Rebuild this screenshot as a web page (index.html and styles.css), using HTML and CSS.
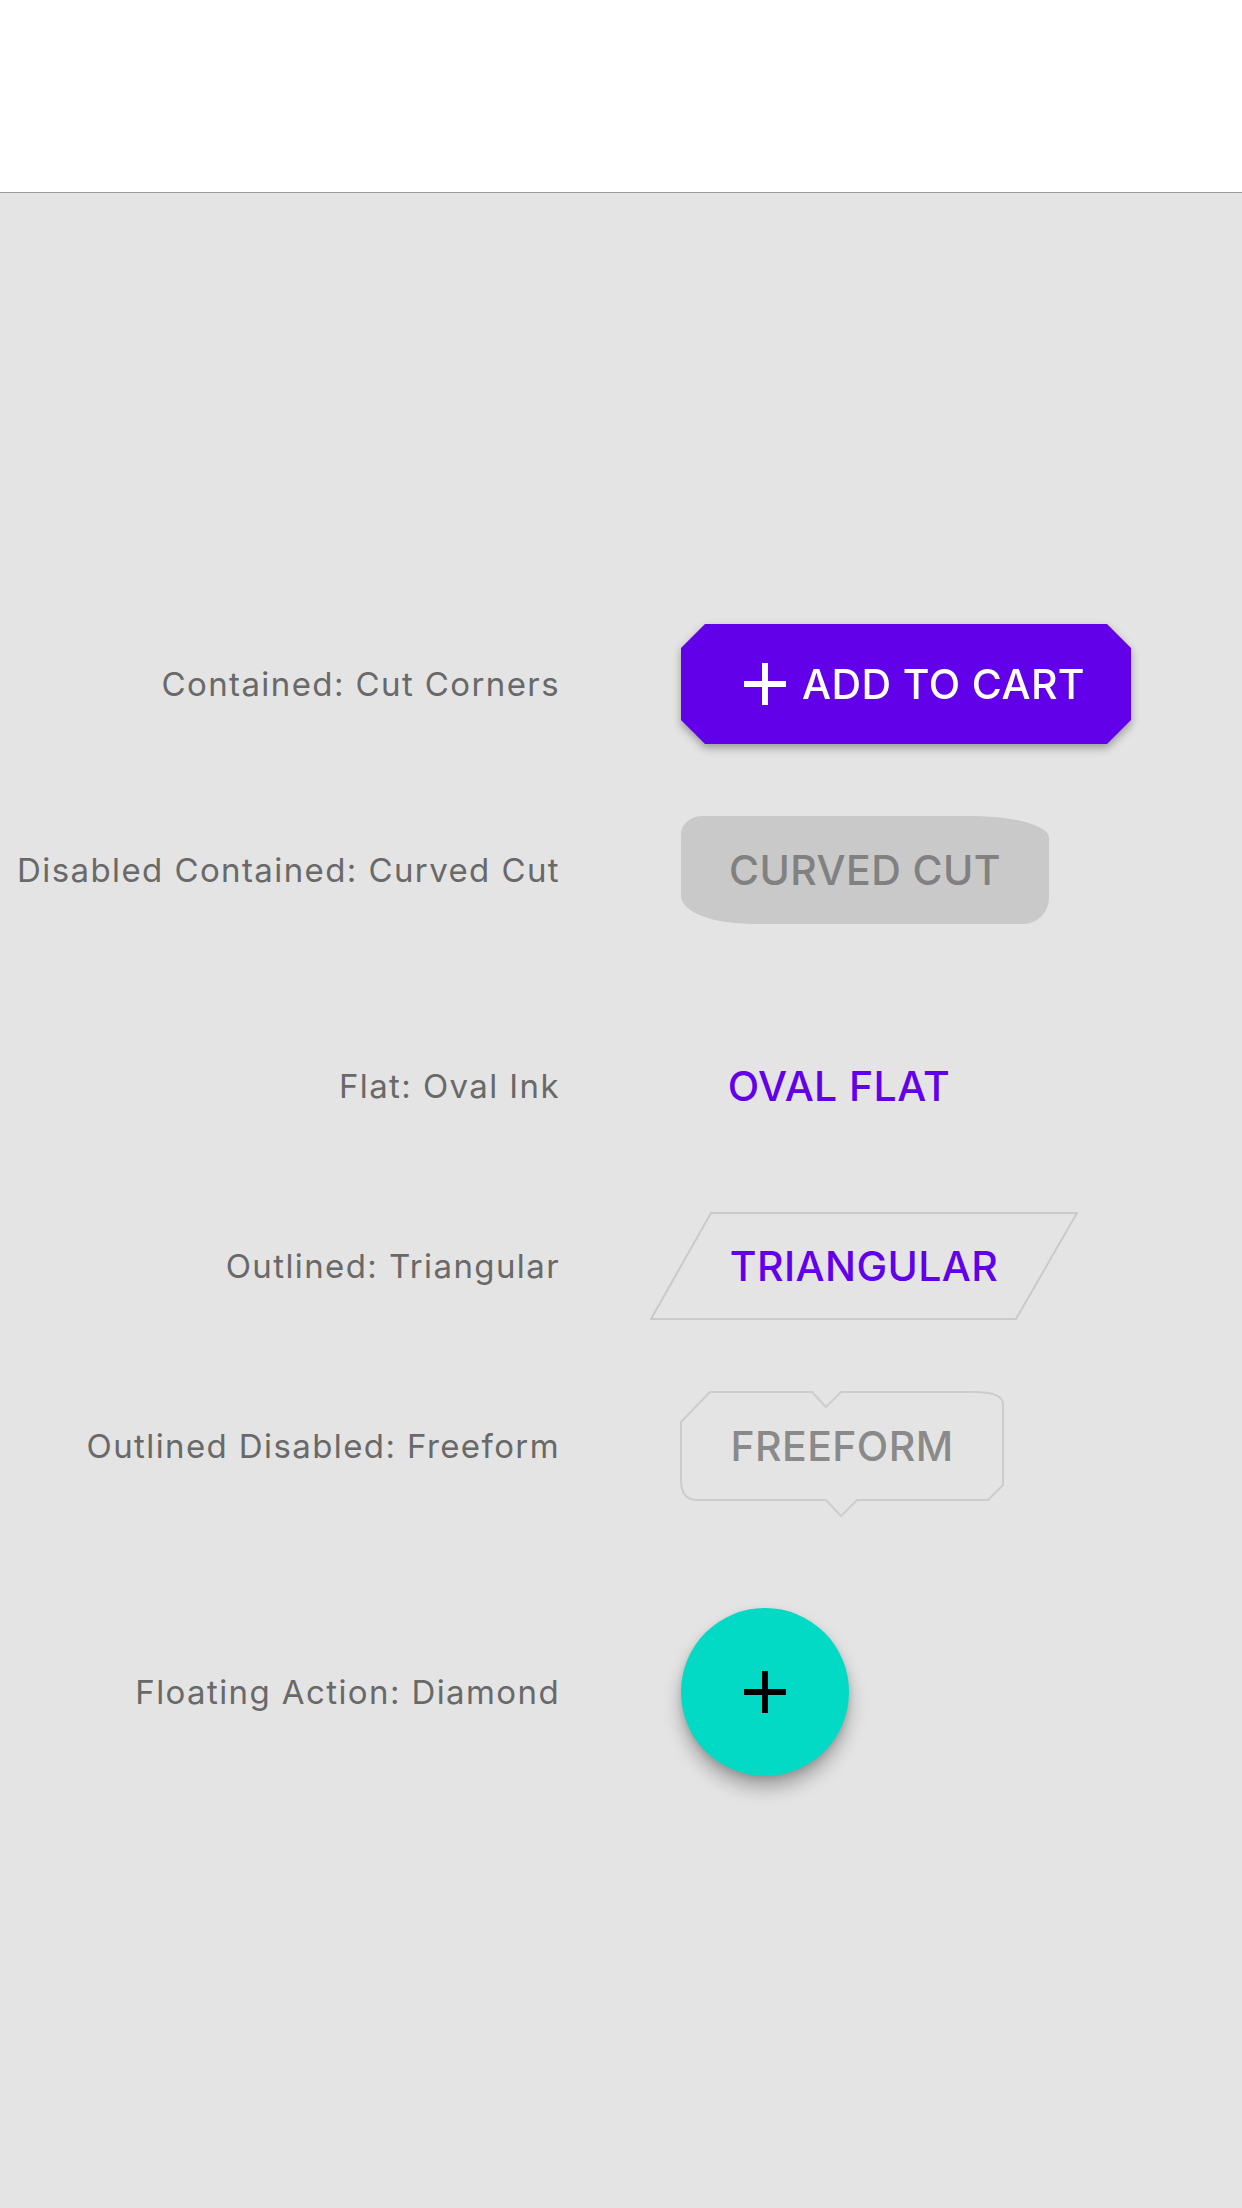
FILE: index.html
```html
<!DOCTYPE html>
<html lang="en">
<head>
<meta charset="utf-8">
<title>Buttons</title>
<link rel="stylesheet" href="styles.css">
</head>
<body>
<header class="topbar"></header>
<main class="list">
  <div class="row">
    <span class="label">Contained: Cut Corners</span>
    <div class="shadow-wrap">
      <button class="btn btn-cut">
        <svg class="plus" viewBox="0 0 42 42" width="42" height="42"><rect x="18" y="0" width="6" height="42"/><rect x="0" y="18" width="42" height="6"/></svg>
        <span>ADD TO CART</span>
      </button>
    </div>
  </div>
  <div class="row">
    <span class="label">Disabled Contained: Curved Cut</span>
    <button class="btn btn-curved" disabled>CURVED CUT</button>
  </div>
  <div class="row row-spaced">
    <span class="label">Flat: Oval Ink</span>
    <button class="btn btn-flat">OVAL FLAT</button>
  </div>
  <div class="row">
    <span class="label">Outlined: Triangular</span>
    <button class="btn btn-tri">
      <svg class="outline outline-tri" viewBox="0 0 428 108" width="428" height="108"><polygon points="61,1 427,1 366,107 1,107"/></svg>
      <span class="btn-text">TRIANGULAR</span>
    </button>
  </div>
  <div class="row">
    <span class="label">Outlined Disabled: Freeform</span>
    <button class="btn btn-free" disabled>
      <svg class="outline outline-free" viewBox="-1 -1 324 127" width="324" height="127"><path d="M0,30 L29,0 L131,0 L145,15 L160,0 L292,0 Q322,0 322,12 L322,93 L307,108 L176,108 L160,124 L145,108 L16,108 Q0,108 0,88 Z"/></svg>
      <span class="btn-text">FREEFORM</span>
    </button>
  </div>
  <div class="row row-spaced">
    <span class="label">Floating Action: Diamond</span>
    <button class="fab">
      <svg class="plus" viewBox="0 0 42 42" width="42" height="42"><rect x="18" y="0" width="6" height="42"/><rect x="0" y="18" width="42" height="6"/></svg>
    </button>
  </div>
</main>
</body>
</html>
```

FILE: styles.css
```css
* { box-sizing: border-box; }

html, body {
  margin: 0;
  padding: 0;
}

body {
  width: 1242px;
  min-height: 2208px;
  background: #e4e4e4;
  font-family: Inter, "Liberation Sans", sans-serif;
}

.topbar {
  height: 193px;
  background: #ffffff;
  border-bottom: 1px solid #999999;
}

.list {
  display: flex;
  flex-direction: column;
  padding-top: 431px;
}

.row {
  display: grid;
  grid-template-columns: 560px auto;
  column-gap: 121px;
  align-items: center;
  justify-items: start;
  margin-bottom: 72px;
}

.row-spaced {
  margin-top: 36px;
}

.label {
  justify-self: end;
  font-size: 33px;
  color: #696969;
  letter-spacing: 1.4px;
  white-space: nowrap;
}

.btn {
  position: relative;
  border: 0;
  margin: 0;
  padding: 0;
  background: none;
  font-family: Inter, "Liberation Sans", sans-serif;
  font-size: 41px;
  font-weight: 500;
  letter-spacing: 0.4px;
  display: flex;
  align-items: center;
  justify-content: center;
  height: 108px;
}

.shadow-wrap {
  filter: drop-shadow(0 4px 4px rgba(0, 0, 0, 0.32));
}

.btn-cut {
  width: 450px;
  height: 120px;
  background: #6200ea;
  color: #ffffff;
  justify-content: flex-start;
  padding-left: 63px;
  gap: 16px;
  clip-path: polygon(24px 0, calc(100% - 24px) 0, 100% 24px, 100% calc(100% - 24px), calc(100% - 24px) 100%, 24px 100%, 0 calc(100% - 24px), 0 24px);
}

.btn-cut .plus { fill: #ffffff; }

.btn-curved {
  width: 368px;
  background: #c9c9c9;
  color: #818181;
  border-radius: 22px 76px 26px 70px / 18px 22px 26px 28px;
}

.btn-flat {
  width: 316px;
  color: #6200ea;
}

.btn-tri {
  width: 366px;
  color: #6200ea;
}

.btn-free {
  width: 322px;
  color: #8a8a8a;
}

.btn-text {
  position: relative;
}

.outline {
  position: absolute;
  pointer-events: none;
  fill: none;
}

.outline-tri {
  left: -31px;
  top: 0;
  stroke: #cacaca;
  stroke-width: 2;
}

.outline-free {
  left: -1px;
  top: -1px;
  stroke: #cdcdcd;
  stroke-width: 2;
}

.fab {
  width: 168px;
  height: 168px;
  border: 0;
  padding: 0;
  border-radius: 50%;
  background: #03dac5;
  display: flex;
  align-items: center;
  justify-content: center;
  box-shadow: 0 12px 18px rgba(0, 0, 0, 0.28), 0 3px 6px rgba(0, 0, 0, 0.12);
}

.fab .plus { fill: #000000; }
```
